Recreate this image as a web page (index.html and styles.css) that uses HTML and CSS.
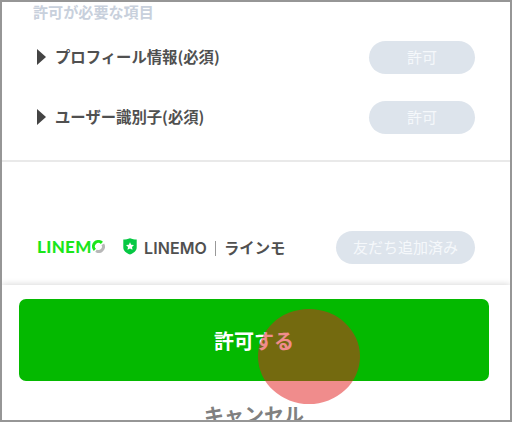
FILE: index.html
```html
<!DOCTYPE html>
<html lang="ja">
<head>
    <meta charset="UTF-8">
    <meta name="viewport" content="width=device-width, initial-scale=1.0">
    <title>LINEMO</title>
    <link rel="stylesheet" href="styles.css">
</head>
<body>
    <div class="screen">
        <div class="permissions">
            <h2>許可が必要な項目</h2>
            <div class="row">
                <span class="arrow"></span>
                <span class="name">プロフィール情報(必須)</span>
                <span class="pill">許可</span>
            </div>
            <div class="row">
                <span class="arrow"></span>
                <span class="name">ユーザー識別子(必須)</span>
                <span class="pill">許可</span>
            </div>
        </div>

        <div class="account">
            <div class="logo">
                <span class="logo-text">LINEM</span>
                <svg width="13" height="13" viewBox="0 0 13 13" fill="none" stroke-width="3">
                    <path d="M2.9 9.9A4.9 4.9 0 0 1 9.9 2.9" stroke="#1be61b"/>
                    <path d="M10.8 4.2A4.9 4.9 0 0 1 4 10.8" stroke="#b8b8b8"/>
                </svg>
            </div>
            <svg class="shield" width="14" height="17" viewBox="0 0 14 17">
                <path d="M7 0.3C9 1.3 11.5 1.5 13.7 1.6V9.5C13.7 13 10.8 15 7 16.6C3.2 15 0.3 13 0.3 9.5V1.6C2.5 1.5 5 1.3 7 0.3Z" fill="#06c843"/>
                <path d="M7 4.2L8.2 6.7L11 7.1L9 9L9.5 11.8L7 10.5L4.5 11.8L5 9L3 7.1L5.8 6.7Z" fill="#fff"/>
            </svg>
            <span class="name"><span class="latin">LINEMO</span><i class="bar"></i>ラインモ</span>
            <span class="pill wide">友だち追加済み</span>
        </div>

        <div class="footer">
            <button class="allow">許可する</button>
            <button class="cancel">キャンセル</button>
        </div>
        <div class="tap"></div>
    </div>
</body>
</html>
```

FILE: styles.css
```css
* {
    box-sizing: border-box;
}

body {
    margin: 0;
    font-family: "Noto Sans CJK JP", sans-serif;
    color: #505050;
}

.screen {
    position: relative;
    height: 422px;
    border: 2px solid #969696;
    background: #fff;
    overflow: hidden;
}

.permissions {
    height: 160px;
    padding: 0 35px 0 31px;
    border-bottom: 2px solid #e9e9e9;
}

h2 {
    height: 25px;
    margin: 0;
    font-size: 15.1px;
    font-weight: 700;
    line-height: 18px;
    color: #c8d0dc;
}

.row {
    display: flex;
    align-items: center;
    height: 60px;
}

.arrow {
    margin: 0 9px 0 4px;
    border-top: 8px solid transparent;
    border-bottom: 8px solid transparent;
    border-left: 9px solid #444;
}

.name {
    padding-bottom: 2px;
    font-size: 15.35px;
    font-weight: 700;
    line-height: 22px;
    white-space: nowrap;
}

.account .name {
    padding-bottom: 0;
}

.latin {
    font-family: Inter, sans-serif;
    font-size: 16px;
    font-weight: 600;
    letter-spacing: 0.1px;
}

.pill {
    width: 106px;
    height: 33px;
    margin-left: auto;
    border-radius: 17px;
    background: #dde4ec;
    color: #f5f8fb;
    font-size: 15px;
    line-height: 31px;
    text-align: center;
}

.pill.wide {
    width: 139px;
}

.account {
    display: flex;
    align-items: center;
    height: 123px;
    padding: 47px 35px 0 35px;
}

.logo {
    display: flex;
    align-items: center;
    width: 86px;
    padding-bottom: 2px;
}

.logo-text {
    margin-right: 0;
    font-family: Lato, sans-serif;
    font-size: 17px;
    font-weight: 900;
    line-height: 17px;
    letter-spacing: 0.3px;
    color: #1be61b;
}

.shield {
    margin: 0 7px 1px 0;
}

.bar {
    display: inline-block;
    width: 1px;
    height: 15px;
    margin: 0 8px;
    background: #999;
    vertical-align: -2px;
}

.footer {
    display: flex;
    flex-direction: column;
    align-items: center;
    height: 135px;
    padding: 14px 21px 0 17px;
    box-shadow: 0 -1px 6px rgba(0, 0, 0, 0.15);
}

button {
    padding: 0;
    border: none;
    background: none;
    font-family: inherit;
    font-size: 20px;
    font-weight: 700;
}

.allow {
    width: 100%;
    height: 82px;
    flex-shrink: 0;
    border-radius: 7px;
    background: #04b900;
    color: #fff;
}

.cancel {
    margin-top: 19px;
    line-height: 30px;
    color: #808080;
}

/* finger position */
.tap {
    position: absolute;
    left: 256px;
    top: 307px;
    width: 102px;
    height: 95px;
    border-radius: 50%;
    background: rgba(226, 29, 30, 0.51);
}
```
